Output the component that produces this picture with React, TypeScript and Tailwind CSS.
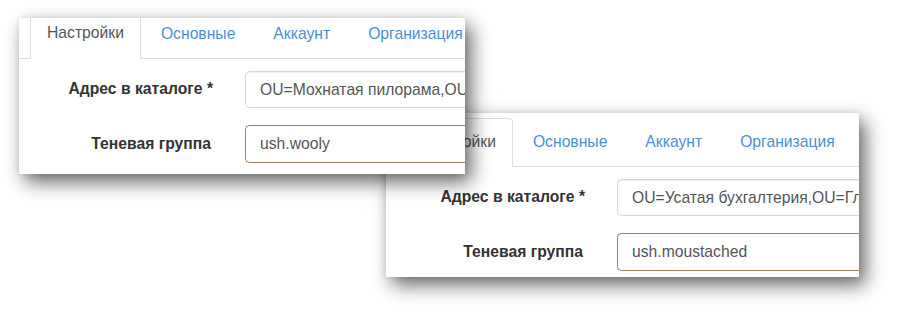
const tabs = ["Настройки", "Основные", "Аккаунт", "Организация"];

type CardProps = {
  className: string;
  tabPad: string;
  topGap: string;
  address: string;
  group: string;
  labelW: string;
};

const Card = ({ className, tabPad, topGap, address, group, labelW }: CardProps) => {
  return (
    <div
      className={`absolute overflow-hidden bg-white shadow-[6px_8px_18px_rgba(0,0,0,0.6),0_0_6px_rgba(0,0,0,0.08)] ${className}`}
    >
      <div className={`flex border-b border-[#dddddd] ${topGap} ${tabPad}`}>
        {tabs.map((tab, i) => (
          <div
            key={tab}
            className={
              i === 0
                ? "-mb-px mr-[2px] shrink-0 whitespace-nowrap rounded-t-[4px] border border-b-0 border-[#dddddd] bg-white px-[16px] pb-[12px] pt-[11px] text-[#555555]"
                : "mr-[2px] shrink-0 whitespace-nowrap border border-transparent px-[17px] pb-[11px] pt-[11px] text-[#4a8fd4]"
            }
          >
            {tab}
          </div>
        ))}
      </div>
      <div className="flex flex-col gap-[17px] pt-[12px]">
        <div className="flex items-center">
          <div className={`${labelW} shrink-0 pr-[32px] text-right font-bold text-[#333333]`}>
            Адрес в каталоге *
          </div>
          <div className="h-[37px] flex-1 whitespace-nowrap rounded-l-[5px] border border-r-0 border-[#d6d6d6] pl-[14px] leading-[35px] text-[#555555] shadow-[inset_0_1px_1px_rgba(0,0,0,0.06)]">
            {address}
          </div>
        </div>
        <div className="flex items-center">
          <div className={`${labelW} shrink-0 pr-[34px] text-right font-bold text-[#333333]`}>
            Теневая группа
          </div>
          <div className="h-[38px] flex-1 whitespace-nowrap rounded-l-[5px] border-[1.5px] border-r-0 border-[#9a8462] pl-[14px] leading-[35px] text-[#555555]">
            {group}
          </div>
        </div>
      </div>
    </div>
  );
};

const App = (): JSX.Element => {
  return (
    <div className="relative h-[315px] w-[898px] overflow-hidden bg-white font-['Liberation_Sans',Arial,sans-serif] text-[15.7px]">
      <Card
        className="left-[386px] top-[113px] z-0 h-[164px] w-[473px]"
        tabPad="pl-[16px]"
        topGap="pt-[5px]"
        address="OU=Усатая бухгалтерия,OU=Глобальная организация"
        group="ush.moustached"
        labelW="w-[231px]"
      />
      <Card
        className="left-[19px] top-[18px] z-10 h-[156px] w-[446px]"
        tabPad="pl-[11px] [&>div:first-child]:rounded-none [&>div:first-child]:border-t-0 [&>div]:pt-[3px] [&>div]:pb-[11px]"
        topGap=""
        address="OU=Мохнатая пилорама,OU=Глобальная организация"
        group="ush.wooly"
        labelW="w-[226px]"
      />
    </div>
  );
};

export default App;
